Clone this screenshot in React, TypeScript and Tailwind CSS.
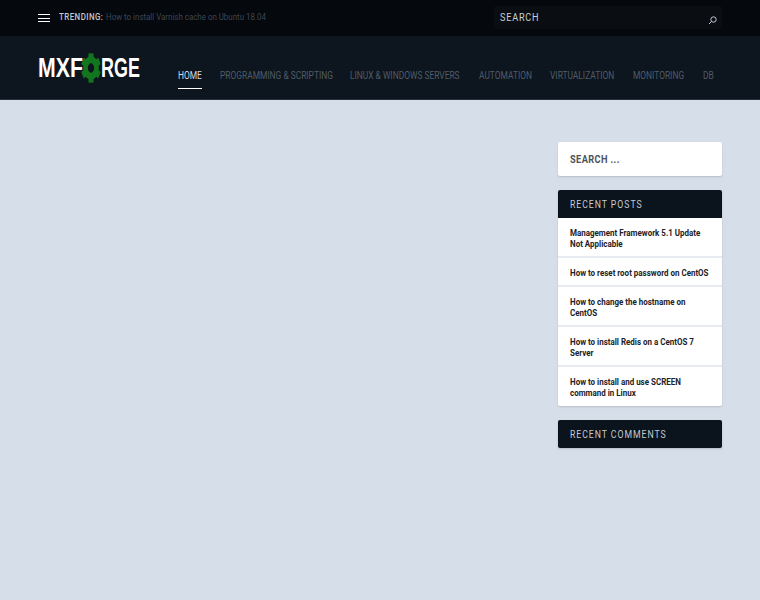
const nav = [
  { t: "HOME", w: "w-[24px]" },
  { t: "PROGRAMMING & SCRIPTING", w: "w-[113px]" },
  { t: "LINUX & WINDOWS SERVERS", w: "w-[111px]" },
  { t: "AUTOMATION", w: "w-[54px]" },
  { t: "VIRTUALIZATION", w: "w-[65px]" },
  { t: "MONITORING", w: "w-[53px]" },
  { t: "DB", w: "w-[11px]" },
];
const posts = [
  ["Management Framework 5.1 Update", "Not Applicable"],
  ["How to reset root password on CentOS"],
  ["How to change the hostname on", "CentOS"],
  ["How to install Redis on a CentOS 7", "Server"],
  ["How to install and use SCREEN", "command in Linux"],
];

function Gear() {
  const teeth = [0, 60, 120, 180, 240, 300];
  return (
    <svg width="20" height="30" viewBox="0 0 24 24" preserveAspectRatio="none" className="shrink-0">
      {teeth.map((a) => (
        <rect key={a} x="9" y="0.3" width="6" height="5.5" fill="#12761f" transform={`rotate(${a} 12 12)`} />
      ))}
      <circle cx="12" cy="12" r="6.6" fill="none" stroke="#12761f" strokeWidth="5.6" />
    </svg>
  );
}

export default function App() {
  return (
    <div className="min-h-[600px] bg-[#d6deea] font-['Roboto',sans-serif] flex flex-col overflow-hidden">
      <div className="h-9 bg-[#05080c] flex items-center px-[38px]">
        <div className="flex flex-col gap-[2.7px] w-[12px] shrink-0 mr-[9px]">
          <span className="h-[1px] w-[12px] bg-white" />
          <span className="h-[1px] w-[12px] bg-white" />
          <span className="h-[1px] w-[12px] bg-white" />
        </div>
        <span className="w-[47px] shrink-0 text-[9px] font-medium tracking-[0.5px] text-[#c3c9d0] whitespace-nowrap inline-block origin-left scale-x-[0.88] -mt-[1px]">TRENDING:</span>
        <span className="text-[9px] text-[#3d4753] whitespace-nowrap inline-block origin-left scale-x-[0.88] -mt-[1px]">How to install Varnish cache on Ubuntu 18.04</span>
        <div className="ml-auto h-[23px] w-[228px] bg-[#0a0d11] flex items-center justify-between pl-[6px] pr-[5px] rounded-[2px] -mt-[1px]">
          <span className="text-[10.5px] tracking-[0.9px] text-[#c8ced4] inline-block origin-left scale-x-[0.87]">SEARCH</span>
          <svg width="9" height="9" viewBox="0 0 9 9" fill="none" stroke="#c3c9d0" strokeWidth="1" className="mt-[6px]">
            <circle cx="5.5" cy="3.5" r="2.7" />
            <path d="M3.5 5.5 L1 8" />
          </svg>
        </div>
      </div>
      <div className="h-[64px] bg-[#0d151e] border-b border-[#27313c] flex pl-[38px]">
        <div className="flex items-center w-[140px] shrink-0 font-['Liberation_Sans',sans-serif] font-bold text-white text-[28px] leading-none">
          <span className="inline-block w-[43px] whitespace-nowrap origin-left scale-x-[0.76]">MXF</span>
          <Gear />
          <span className="inline-block w-[38px] whitespace-nowrap origin-left scale-x-[0.64]">RGE</span>
        </div>
        <div className="flex gap-[17.5px]">
          {nav.map((n, i) => (
            <div key={n.t} className={`relative shrink-0 pt-[33px] whitespace-nowrap ${n.w}`}>
              <span className={`block text-[10px] leading-[14px] origin-left scale-x-[0.84] ${i === 0 ? "text-[#d5dae0]" : "text-[#505c69]"}`}>{n.t}</span>
              {i === 0 && <div className="absolute left-0 right-0 top-[52px] h-[1px] bg-white" />}
            </div>
          ))}
        </div>
      </div>
      <div className="flex justify-end pr-[38px] pt-[42px]">
        <div className="w-[164px] flex flex-col gap-[14px]">
          <div className="h-[34px] bg-white rounded-[2px] shadow-[0_1px_2px_rgba(0,0,0,0.15)] flex items-center pl-3 pt-[1px]">
            <span className="text-[11.5px] font-bold tracking-[0.5px] text-[#4b5259] inline-block origin-left scale-x-[0.8]">SEARCH ...</span>
          </div>
          <div className="rounded-[2px] shadow-[0_1px_2px_rgba(0,0,0,0.15)] bg-white">
            <div className="h-[28px] bg-[#0b141c] rounded-t-[2px] flex items-center pl-3">
              <span className="text-[10px] tracking-[1.1px] text-[#c3cbd3] inline-block origin-left scale-x-[0.87]">RECENT POSTS</span>
            </div>
            {posts.map((p, i) => (
              <div key={i} className={`px-3 pt-[8.5px] ${i < posts.length - 1 ? "pb-[7.5px] border-b-2 border-[#e8ebef]" : "pb-[8.5px]"}`}>
                {p.map((l) => (
                  <div key={l} className="text-[9.5px] leading-[11px] font-bold text-[#1d2227] whitespace-nowrap origin-left scale-x-[0.84]">{l}</div>
                ))}
              </div>
            ))}
          </div>
          <div className="h-[28px] bg-[#0b141c] rounded-[2px] shadow-[0_1px_2px_rgba(0,0,0,0.15)] flex items-center pl-3">
            <span className="text-[10px] tracking-[1.1px] text-[#c3cbd3] inline-block origin-left scale-x-[0.87]">RECENT COMMENTS</span>
          </div>
        </div>
      </div>
    </div>
  );
}
